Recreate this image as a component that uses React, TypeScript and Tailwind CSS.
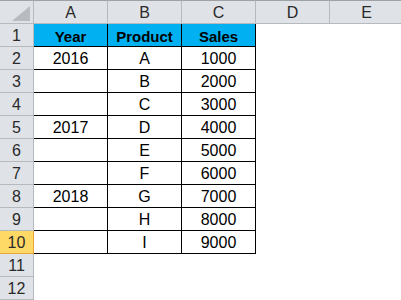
const font = { fontFamily: '"Liberation Sans", Arial, sans-serif' };

const cols = ['A', 'B', 'C', 'D', 'E'];

const rows: string[][] = [
  ['Year', 'Product', 'Sales'],
  ['2016', 'A', '1000'],
  ['', 'B', '2000'],
  ['', 'C', '3000'],
  ['2017', 'D', '4000'],
  ['', 'E', '5000'],
  ['', 'F', '6000'],
  ['2018', 'G', '7000'],
  ['', 'H', '8000'],
  ['', 'I', '9000'],
  [],
  [],
];

function CornerCell() {
  return (
    <div className="relative h-[24px] border-t border-r border-b border-t-[#9ea2a7] border-r-[#b6babf] border-b-[#b6babf] bg-[#dfe2e7]">
      <svg className="absolute left-[12px] top-[5px]" width="18" height="15" viewBox="0 0 18 15">
        <polygon points="18,0 18,15 0,15" fill="#b7bbc0" />
      </svg>
    </div>
  );
}

export default function App() {
  return (
    <div className="w-[401px] h-[300px] overflow-hidden bg-white" style={font}>
      <div className="grid grid-cols-[34px_74px_74px_74px_74px_74px] text-[16px] leading-none text-[#1e1e1e]">
        {/* column headers */}
        <CornerCell />
        {cols.map((c) => (
          <div
            key={c}
            className="flex h-[24px] items-end justify-center border-t border-r border-b border-t-[#9ea2a7] border-r-[#b6babf] border-b-[#b6babf] bg-[#dfe2e7] pb-[2px] text-[#2a2a2a]"
          >
            {c}
          </div>
        ))}

        {rows.map((row, i) => {
          const n = i + 1;
          const selected = n === 10;
          return (
            <div key={n} className="contents">
              <div
                className={
                  selected
                    ? 'flex h-[23px] items-end justify-center border-r border-b border-[#eaa53a] bg-[#ffd966] pb-[2px] text-[#2a2a2a]'
                    : 'flex h-[23px] items-end justify-center border-r border-b border-[#b6babf] bg-[#dfe2e7] pb-[2px] text-[#2a2a2a]'
                }
              >
                {n}
              </div>
              {cols.map((c, j) => {
                const inTable = j < 3 && n <= 10;
                const header = n === 1 && inTable;
                return (
                  <div
                    key={c}
                    className={
                      header
                        ? 'flex h-[23px] items-end justify-center border-r border-b border-black bg-[#00b0f0] pb-[2px] text-[15px] font-bold text-black'
                        : inTable
                          ? 'flex h-[23px] items-end justify-center border-r border-b border-black pb-[2px] text-black'
                          : 'h-[23px] border-r border-b border-transparent'
                    }
                  >
                    {inTable ? row[j] : null}
                  </div>
                );
              })}
            </div>
          );
        })}
      </div>
    </div>
  );
}
